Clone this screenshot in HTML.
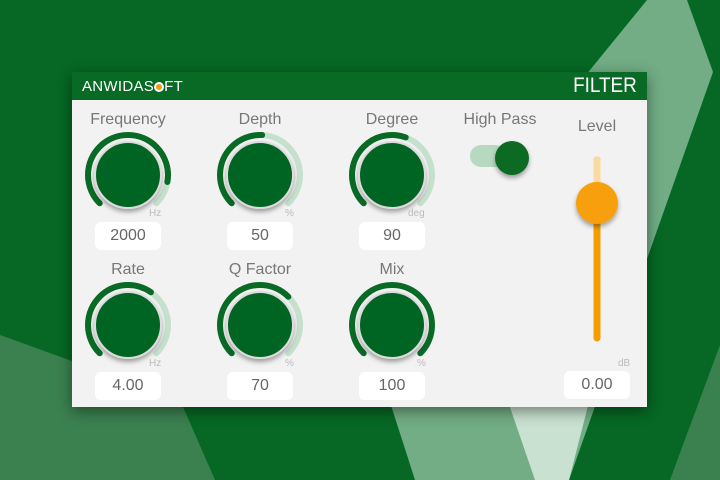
<!DOCTYPE html>
<html><head><meta charset="utf-8"><style>
*{margin:0;padding:0;box-sizing:border-box}
body{width:720px;height:480px;overflow:hidden;background:#066824;font-family:"Liberation Sans",sans-serif;position:relative}
.bg{position:absolute;left:0;top:0}
.panel{position:absolute;left:72px;top:72px;width:575px;height:335px;background:#f2f2f2;box-shadow:0 4px 14px rgba(0,0,0,.45)}
.hdr{position:absolute;left:0;top:0;width:575px;height:28px;background:#086a24}
.logo{position:absolute;left:10px;top:6px;color:#fff;font-size:15px;letter-spacing:0.3px}
.dot{display:inline-block;width:10px;height:10px;border-radius:50%;background:#f39c12;border:2px solid #fff;vertical-align:-1px}
.title{position:absolute;right:10px;top:2px;color:#fff;font-size:21px;transform:scaleX(.9);transform-origin:right}
.lbl{position:absolute;width:120px;text-align:center;color:#777;font-size:16px}
.box{position:absolute;width:66px;height:28px;background:#fff;border-radius:6px;text-align:center;line-height:28px;color:#666;font-size:16px}
.unit{position:absolute;color:#bbb;font-size:10px}
svg.p{position:absolute;left:0;top:0}
</style></head><body>
<svg class="bg" width="720" height="480">
<polygon points="0,335 180,400 215,480 0,480" fill="#3b8150"/>
<polygon points="647,0 687,0 713,72 569,480 415,480 370,340" fill="#72ad85"/>
<polygon points="480,320 610,320 569,480 535,480" fill="#c9e1d0"/>
<polygon points="720,345 720,480 670,480" fill="#3b8150"/>
</svg>
<div class="panel">
<div class="hdr"><div class="logo">ANWIDAS<span class="dot"></span>FT</div><div class="title">FILTER</div></div>
<svg class="p" width="575" height="335">
<defs><filter id="s" x="-30%" y="-30%" width="160%" height="160%"><feDropShadow dx="0" dy="3" stdDeviation="2.5" flood-opacity=".35"/></filter></defs>
<g fill="none" stroke-width="6" stroke-linecap="round">
<!-- knobs: centers relative to panel -->
<g transform="translate(56,103)"><circle r="40" transform="rotate(135)" pathLength="360" stroke="#c5e0cc" stroke-dasharray="270 90"/><circle r="40" transform="rotate(135)" pathLength="360" stroke="#086a24" stroke-dasharray="235 400"/></g>
<g transform="translate(188,103)"><circle r="40" transform="rotate(135)" pathLength="360" stroke="#c5e0cc" stroke-dasharray="270 90"/><circle r="40" transform="rotate(135)" pathLength="360" stroke="#086a24" stroke-dasharray="138 400"/></g>
<g transform="translate(320,103)"><circle r="40" transform="rotate(135)" pathLength="360" stroke="#c5e0cc" stroke-dasharray="270 90"/><circle r="40" transform="rotate(135)" pathLength="360" stroke="#086a24" stroke-dasharray="155 400"/></g>
<g transform="translate(56,253)"><circle r="40" transform="rotate(135)" pathLength="360" stroke="#c5e0cc" stroke-dasharray="270 90"/><circle r="40" transform="rotate(135)" pathLength="360" stroke="#086a24" stroke-dasharray="170 400"/></g>
<g transform="translate(188,253)"><circle r="40" transform="rotate(135)" pathLength="360" stroke="#c5e0cc" stroke-dasharray="270 90"/><circle r="40" transform="rotate(135)" pathLength="360" stroke="#086a24" stroke-dasharray="180 400"/></g>
<g transform="translate(320,253)"><circle r="40" transform="rotate(135)" pathLength="360" stroke="#086a24" stroke-dasharray="270 90"/></g>
</g>
<g fill="#066522" stroke="#dcdcdc" stroke-width="2" filter="url(#s)">
<circle cx="56" cy="103" r="33"/><circle cx="188" cy="103" r="33"/><circle cx="320" cy="103" r="33"/>
<circle cx="56" cy="253" r="33"/><circle cx="188" cy="253" r="33"/><circle cx="320" cy="253" r="33"/>
</g>
<rect x="398" y="73" width="36" height="22" rx="11" fill="#b6d9c0"/>
<circle cx="440" cy="86" r="17" fill="#086a24" filter="url(#s)"/>
<line x1="525" y1="88" x2="525" y2="266" stroke="#f59d00" stroke-width="7" stroke-linecap="round"/>
<line x1="525" y1="88" x2="525" y2="125" stroke="#fbd9a3" stroke-width="7" stroke-linecap="round"/>
<circle cx="525" cy="131" r="21" fill="#f79f07" filter="url(#s)"/>
</svg>
<div class="lbl" style="left:-4px;top:39px">Frequency</div>
<div class="lbl" style="left:128px;top:39px">Depth</div>
<div class="lbl" style="left:260px;top:39px">Degree</div>
<div class="lbl" style="left:368px;top:39px">High Pass</div>
<div class="lbl" style="left:465px;top:46px">Level</div>
<div class="lbl" style="left:-4px;top:189px">Rate</div>
<div class="lbl" style="left:128px;top:189px">Q Factor</div>
<div class="lbl" style="left:260px;top:189px">Mix</div>
<div class="unit" style="left:77px;top:136px">Hz</div>
<div class="unit" style="left:213px;top:136px">%</div>
<div class="unit" style="left:336px;top:136px">deg</div>
<div class="unit" style="left:77px;top:286px">Hz</div>
<div class="unit" style="left:213px;top:286px">%</div>
<div class="unit" style="left:345px;top:286px">%</div>
<div class="unit" style="left:546px;top:286px">dB</div>
<div class="box" style="left:23px;top:150px">2000</div>
<div class="box" style="left:155px;top:150px">50</div>
<div class="box" style="left:287px;top:150px">90</div>
<div class="box" style="left:23px;top:300px">4.00</div>
<div class="box" style="left:155px;top:300px">70</div>
<div class="box" style="left:287px;top:300px">100</div>
<div class="box" style="left:492px;top:299px">0.00</div>
</div>
</body></html>
